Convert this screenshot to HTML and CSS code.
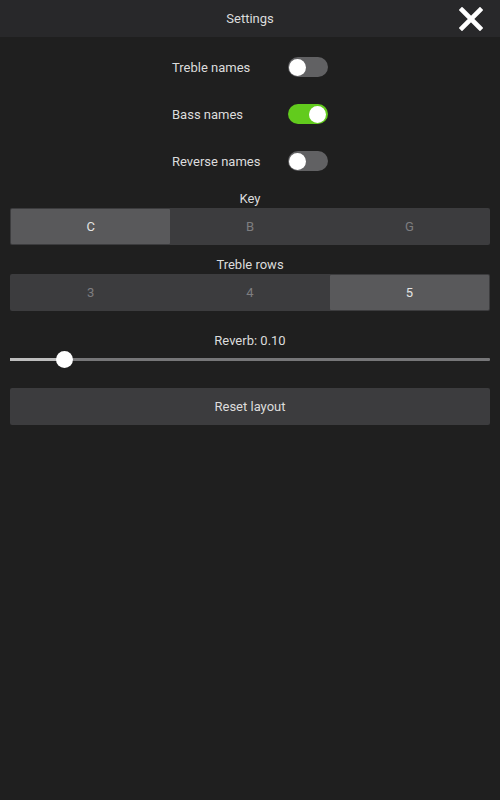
FILE: index.html
```html
<!DOCTYPE html>
<html>
<head>
<meta charset="utf-8">
<link rel="stylesheet" href="styles.css">
</head>
<body>
<div class="app">
  <header class="topbar">
    <span class="title">Settings</span>
    <button class="close" aria-label="Close">
      <svg width="24" height="24" viewBox="0 0 24 24"><path d="M3 3 L21 21 M21 3 L3 21" stroke="#fff" stroke-width="4.6" stroke-linecap="square"/></svg>
    </button>
  </header>
  <main class="content">
    <div class="toggles">
      <div class="toggle-row"><span class="label">Treble names</span><span class="switch"><span class="knob"></span></span></div>
      <div class="toggle-row"><span class="label">Bass names</span><span class="switch on"><span class="knob"></span></span></div>
      <div class="toggle-row"><span class="label">Reverse names</span><span class="switch"><span class="knob"></span></span></div>
    </div>
    <div class="group group-key">
      <div class="group-title">Key</div>
      <div class="segmented">
        <div class="seg active">C</div>
        <div class="seg">B</div>
        <div class="seg">G</div>
      </div>
    </div>
    <div class="group group-rows">
      <div class="group-title">Treble rows</div>
      <div class="segmented">
        <div class="seg">3</div>
        <div class="seg">4</div>
        <div class="seg active">5</div>
      </div>
    </div>
    <div class="group group-slider">
      <div class="group-title">Reverb: 0.10</div>
      <div class="slider">
        <div class="track"><div class="fill" style="width:11.3%"></div><div class="thumb" style="left:11.3%"></div></div>
      </div>
    </div>
    <button class="reset">Reset layout</button>
  </main>
</div>
</body>
</html>
```
FILE: styles.css
```css
html, body {
  margin: 0;
  padding: 0;
  background: #1f1f1f;
  font-family: Roboto, "Liberation Sans", sans-serif;
  color: #dcdcdc;
}
.app {
  width: 500px;
  min-height: 800px;
  background: #1f1f1f;
}
.topbar {
  height: 37px;
  background: #28282a;
  display: flex;
  align-items: center;
  justify-content: center;
  position: relative;
}
.title {
  font-size: 13px;
  color: #dcdcdc;
}
.close {
  position: absolute;
  right: 17px;
  top: 7px;
  width: 24px;
  height: 24px;
  padding: 0;
  border: 0;
  background: none;
  display: flex;
}
.content {
  padding: 0 10px;
  display: flex;
  flex-direction: column;
}
.toggles {
  display: flex;
  flex-direction: column;
  padding-top: 20px;
  gap: 27px;
}
.toggle-row {
  display: grid;
  grid-template-columns: 116px 40px;
  justify-content: center;
  align-items: center;
  height: 20px;
}
.label {
  font-size: 13px;
  color: #dcdcdc;
}
.switch {
  width: 40px;
  height: 20px;
  border-radius: 10px;
  background: #616163;
  display: flex;
  align-items: center;
  padding: 0 2px;
  box-sizing: border-box;
}
.switch.on {
  background: #62cb1d;
  justify-content: flex-end;
}
.knob {
  width: 17px;
  height: 17px;
  border-radius: 50%;
  background: #fff;
}
.switch:not(.on) .knob { margin-left: -1px; }
.group {
  display: flex;
  flex-direction: column;
  align-items: stretch;
}
.group-key { margin-top: 19px; }
.group-rows { margin-top: 11px; }
.group-slider { margin-top: 21px; }
.group-title {
  text-align: center;
  font-size: 13px;
  color: #dcdcdc;
  height: 17px;
  line-height: 17px;
  margin-bottom: 1px;
}
.segmented {
  display: grid;
  grid-template-columns: 1fr 1fr 1fr;
  background: #3c3c3e;
  border-radius: 2px;
  padding: 1px;
  height: 37px;
  box-sizing: border-box;
}
.seg {
  display: flex;
  align-items: center;
  justify-content: center;
  font-size: 13px;
  color: #7e7e80;
}
.seg.active {
  background: #59595b;
  color: #e4e4e4;
  border-radius: 1px;
}
.group-slider .group-title { margin-bottom: 0; }
.slider {
  height: 20px;
  display: flex;
  align-items: center;
}
.track {
  position: relative;
  width: 100%;
  height: 3px;
  background: #767678;
  border-radius: 1px;
}
.fill {
  height: 100%;
  background: #bdbdbd;
}
.thumb {
  position: absolute;
  top: 50%;
  width: 17px;
  height: 17px;
  margin-left: -8.5px;
  margin-top: -8.5px;
  border-radius: 50%;
  background: #fff;
}
.reset {
  margin-top: 19px;
  height: 37px;
  border: 0;
  border-radius: 2px;
  background: #3c3c3e;
  color: #dcdcdc;
  font-family: Roboto, "Liberation Sans", sans-serif;
  font-size: 13px;
  padding: 0;
}
```
